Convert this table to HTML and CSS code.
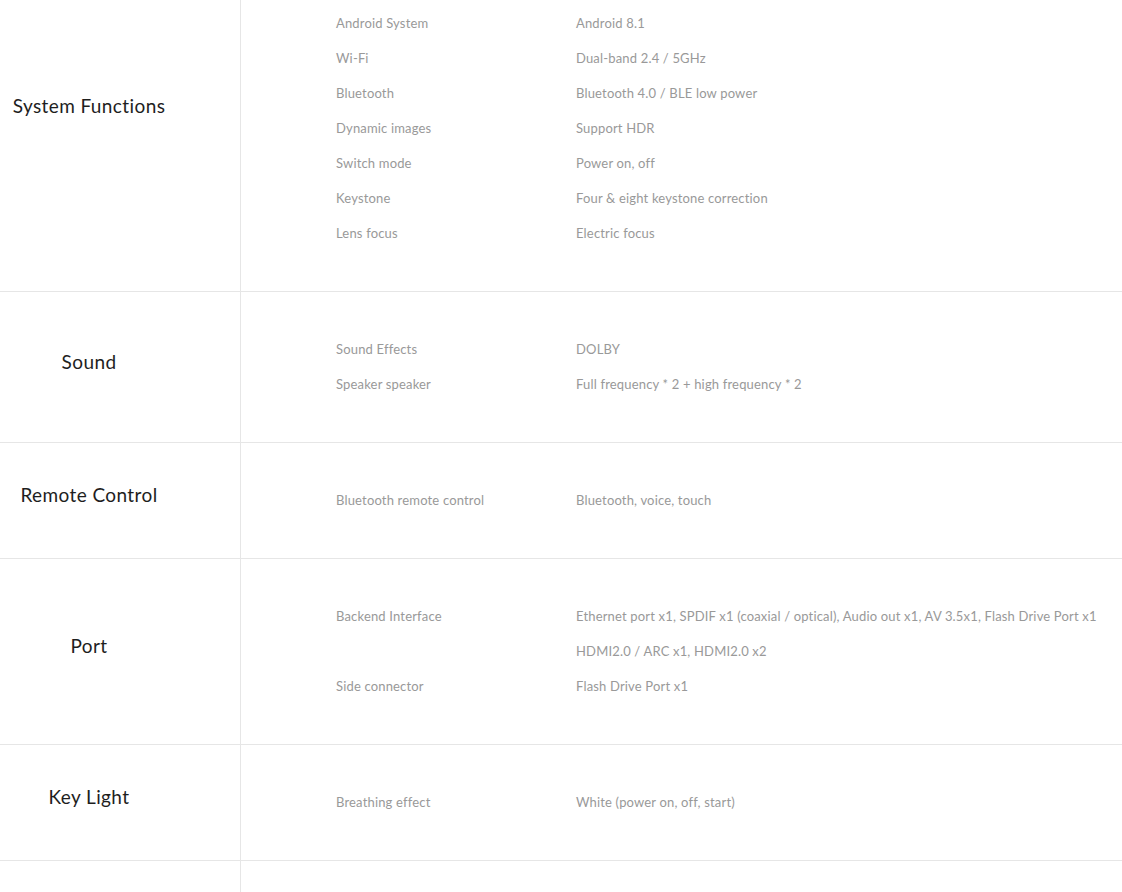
FILE: index.html
```html
<!DOCTYPE html>
<html lang="en">
<head>
<meta charset="utf-8">
<title>Specifications</title>
<link rel="stylesheet" href="styles.css">
</head>
<body>
<div class="specs">
  <section class="row">
    <div class="cat"><span>System Functions</span></div>
    <div class="items items-lead">
      <div class="item"><span class="k">Android System</span><span class="v">Android 8.1</span></div>
      <div class="item"><span class="k">Wi-Fi</span><span class="v">Dual-band 2.4 / 5GHz</span></div>
      <div class="item"><span class="k">Bluetooth</span><span class="v">Bluetooth 4.0 / BLE low power</span></div>
      <div class="item"><span class="k">Dynamic images</span><span class="v">Support HDR</span></div>
      <div class="item"><span class="k">Switch mode</span><span class="v">Power on, off</span></div>
      <div class="item"><span class="k">Keystone</span><span class="v">Four &amp; eight keystone correction</span></div>
      <div class="item"><span class="k">Lens focus</span><span class="v">Electric focus</span></div>
    </div>
  </section>
  <section class="row">
    <div class="cat"><span>Sound</span></div>
    <div class="items">
      <div class="item"><span class="k">Sound Effects</span><span class="v">DOLBY</span></div>
      <div class="item"><span class="k">Speaker speaker</span><span class="v">Full frequency * 2 + high frequency * 2</span></div>
    </div>
  </section>
  <section class="row">
    <div class="cat"><span>Remote Control</span></div>
    <div class="items">
      <div class="item"><span class="k">Bluetooth remote control</span><span class="v">Bluetooth, voice, touch</span></div>
    </div>
  </section>
  <section class="row">
    <div class="cat"><span>Port</span></div>
    <div class="items">
      <div class="item"><span class="k">Backend Interface</span><span class="v">Ethernet port x1, SPDIF x1 (coaxial / optical), Audio out x1, AV 3.5x1, Flash Drive Port x1</span></div>
      <div class="item"><span class="k"></span><span class="v">HDMI2.0 / ARC x1, HDMI2.0 x2</span></div>
      <div class="item"><span class="k">Side connector</span><span class="v">Flash Drive Port x1</span></div>
    </div>
  </section>
  <section class="row">
    <div class="cat"><span>Key Light</span></div>
    <div class="items">
      <div class="item"><span class="k">Breathing effect</span><span class="v">White (power on, off, start)</span></div>
    </div>
  </section>
  <section class="row row-tail">
    <div class="cat"></div>
    <div class="items"></div>
  </section>
</div>
</body>
</html>
```

FILE: styles.css
```css
html, body {
  margin: 0;
  padding: 0;
  overflow: hidden;
  background: #fff;
}

body {
  font-family: Lato, "Open Sans", "Liberation Sans", sans-serif;
}

.specs {
  margin-top: -69px;
}

.row {
  display: flex;
  border-bottom: 1px solid #e6e6e6;
}

.row-tail {
  min-height: 116px;
}

.cat {
  width: 241px;
  flex: none;
  box-sizing: border-box;
  border-right: 1px solid #e6e6e6;
  padding: 0 62px 12px 0;
  display: flex;
  align-items: center;
  justify-content: center;
  text-align: center;
  font-size: 19px;
  letter-spacing: 0.4px;
  color: #1e1e1e;
}

.items {
  padding: 39px 0 41px 95px;
}

.items-lead {
  padding-top: 74px;
}

.item {
  display: flex;
  height: 35px;
  align-items: center;
  font-size: 13px;
  letter-spacing: 0.17px;
  color: #999;
  white-space: nowrap;
}

.k {
  width: 240px;
  flex: none;
}
```
